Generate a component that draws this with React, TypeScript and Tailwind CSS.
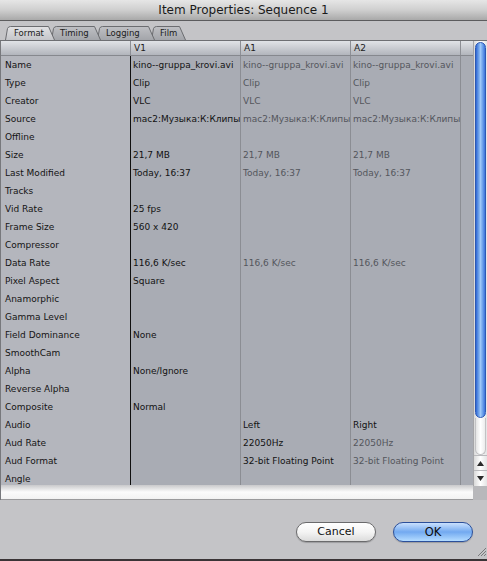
import React from "react"

const font = "font-['DejaVu_Sans',sans-serif]"

type Cell = { t: string; dim?: boolean }
type Row = { label: string; v1?: string; a1?: Cell; a2?: Cell }

const file = "kino--gruppa_krovi.avi"
const src = "mac2:Музыка:К:Клипы:К"

const rows: Row[] = [
  { label: "Name", v1: file, a1: { t: file, dim: true }, a2: { t: file, dim: true } },
  { label: "Type", v1: "Clip", a1: { t: "Clip", dim: true }, a2: { t: "Clip", dim: true } },
  { label: "Creator", v1: "VLC", a1: { t: "VLC", dim: true }, a2: { t: "VLC", dim: true } },
  { label: "Source", v1: src, a1: { t: src, dim: true }, a2: { t: src, dim: true } },
  { label: "Offline" },
  { label: "Size", v1: "21,7 MB", a1: { t: "21,7 MB", dim: true }, a2: { t: "21,7 MB", dim: true } },
  { label: "Last Modified", v1: "Today, 16:37", a1: { t: "Today, 16:37", dim: true }, a2: { t: "Today, 16:37", dim: true } },
  { label: "Tracks" },
  { label: "Vid Rate", v1: "25 fps" },
  { label: "Frame Size", v1: "560 x 420" },
  { label: "Compressor" },
  { label: "Data Rate", v1: "116,6 K/sec", a1: { t: "116,6 K/sec", dim: true }, a2: { t: "116,6 K/sec", dim: true } },
  { label: "Pixel Aspect", v1: "Square" },
  { label: "Anamorphic" },
  { label: "Gamma Level" },
  { label: "Field Dominance", v1: "None" },
  { label: "SmoothCam" },
  { label: "Alpha", v1: "None/Ignore" },
  { label: "Reverse Alpha" },
  { label: "Composite", v1: "Normal" },
  { label: "Audio", a1: { t: "Left" }, a2: { t: "Right" } },
  { label: "Aud Rate", a1: { t: "22050Hz" }, a2: { t: "22050Hz", dim: true } },
  { label: "Aud Format", a1: { t: "32-bit Floating Point" }, a2: { t: "32-bit Floating Point", dim: true } },
  { label: "Angle" },
]

const tabs = [
  { name: "Format", w: 50, active: true },
  { name: "Timing", w: 50 },
  { name: "Logging", w: 58 },
  { name: "Film", w: 35 },
]

function Tab({ name, w, active, z }: { name: string; w: number; active?: boolean; z: number }) {
  const h = 14
  const d = `M0.5,${h} L2.5,2.5 Q3.3,0.5 5.5,0.5 L${w - 6.5},0.5 L${w - 0.5},${h}`
  return (
    <div className="relative h-[14px] shrink-0 -ml-[4px] first:ml-0" style={{ width: w, zIndex: z }}>
      <svg className="absolute inset-0" width={w} height={h}>
        <defs>
          <linearGradient id={"g" + name} x1="0" y1="0" x2="0" y2="1">
            <stop offset="0" stopColor={active ? "#e2e2e4" : "#bfc0c4"} />
            <stop offset="1" stopColor={active ? "#c4c5c9" : "#a3a5aa"} />
          </linearGradient>
        </defs>
        <path d={d + " Z"} fill={`url(#g${name})`} />
        <path d={d} fill="none" stroke="#6b6c70" strokeWidth="1" />
      </svg>
      <div className={`relative pl-[9px] pt-[1px] text-[8.5px] leading-[13px] text-[#1c1c1c] whitespace-nowrap ${font}`}>{name}</div>
    </div>
  )
}

function Val({ c }: { c?: Cell }) {
  if (!c) return null
  return <span className={c.dim ? "text-[#54565c]" : "text-[#121212]"}>{c.t}</span>
}

export default function App() {
  return (
    <div className={`w-[487px] h-[561px] flex flex-col bg-[#c4c4c7] overflow-hidden ${font}`}>
      <div className="h-[21px] shrink-0 border-b border-[#5c5c5e] bg-gradient-to-b from-[#e6e6e6] via-[#cfcfcf] to-[#a9a9a9] flex items-center justify-center">
        <span className="text-[12px] text-[#1a1a1a]">Item Properties: Sequence 1</span>
      </div>

      <div className="h-[19px] shrink-0 flex items-end pl-[5px]">
        {tabs.map((t, i) => (
          <Tab key={t.name} name={t.name} w={t.w} active={t.active} z={10 - i} />
        ))}
      </div>

      <div className="flex h-[460px] shrink-0 border-t border-[#6e6f73]">
        <div className="flex-1 flex flex-col border-l border-[#77787c] min-w-0">
          <div className="h-[15px] shrink-0 grid grid-cols-[130px_110px_110px_110px_1fr] border-b border-[#86888e] bg-gradient-to-b from-[#e1e3e7] to-[#b2b5bc] text-[9px] leading-[14px] text-[#1c1c1c]">
            <div className="border-r border-[#8d8f95]" />
            <div className="border-r border-[#8d8f95] pl-[3px]">V1</div>
            <div className="border-r border-[#8d8f95] pl-[3px]">A1</div>
            <div className="border-r border-[#8d8f95] pl-[3px]">A2</div>
            <div />
          </div>
          <div className="h-[429px] shrink-0 overflow-hidden grid grid-cols-[130px_110px_110px_110px_1fr] text-[9px] leading-[18px]">
            <div className="flex flex-col border-r border-[#101010] bg-[#b4b6bd] text-[#141414]">
              {rows.map(r => (
                <div key={r.label} className="h-[18px] pl-[4px] whitespace-nowrap">{r.label}</div>
              ))}
            </div>
            <div className="flex flex-col border-r border-[#8b8d93] bg-[#a9acb4] text-[#121212]">
              {rows.map(r => (
                <div key={r.label} className="h-[18px] pl-[2px] whitespace-nowrap overflow-hidden">{r.v1}</div>
              ))}
            </div>
            <div className="flex flex-col border-r border-[#8b8d93] bg-[#a9acb4]">
              {rows.map(r => (
                <div key={r.label} className="h-[18px] pl-[2px] whitespace-nowrap overflow-hidden"><Val c={r.a1} /></div>
              ))}
            </div>
            <div className="flex flex-col border-r border-[#8b8d93] bg-[#a9acb4]">
              {rows.map(r => (
                <div key={r.label} className="h-[18px] pl-[2px] whitespace-nowrap overflow-hidden"><Val c={r.a2} /></div>
              ))}
            </div>
            <div className="bg-[#a9acb4]" />
          </div>
          <div className="h-[15px] shrink-0 bg-gradient-to-b from-[#c9c9cb] via-[#fbfbfb] to-[#f2f2f2] border-b border-[#9a9a9c]" />
        </div>

        <div className="w-[14px] shrink-0 flex flex-col">
          <div className="h-[445px] shrink-0 flex flex-col bg-gradient-to-r from-[#d9d9d9] via-white to-[#e4e4e4] border-l border-[#a5a5a8]">
            <div className="h-[376px] shrink-0 mx-[1px] mt-[1px] rounded-full border border-[#2c58b4] bg-gradient-to-r from-[#2f66d2] via-[#9cc8f8] to-[#3b74da]" />
            <div className="h-[37px] shrink-0 mx-[1px] rounded-b-full border-b border-x border-[#c2c2c4]" />
            <div className="h-[15px] shrink-0 flex items-center justify-center border-t border-[#b9b9bc]">
              <svg width="7" height="5"><path d="M3.5,0 L7,5 L0,5 Z" fill="#2a2a2a" /></svg>
            </div>
            <div className="h-[16px] shrink-0 flex items-center justify-center border-t border-[#b9b9bc]">
              <svg width="7" height="5"><path d="M0,0 L7,0 L3.5,5 Z" fill="#2a2a2a" /></svg>
            </div>
          </div>
          <div className="flex-1 bg-[#b8b8bb]" />
        </div>
      </div>

      <div className="flex-1 relative flex justify-end items-start pt-[22px] pr-[14px] gap-[17px]">
        <button className="w-[80px] h-[20px] rounded-full border border-[#6a6a6c] bg-gradient-to-b from-white via-[#f4f4f4] to-[#dcdcdc] text-[11px] leading-[18px] text-[#111] shadow-[0_1px_1px_rgba(0,0,0,0.2)]">
          Cancel
        </button>
        <button className="w-[80px] h-[20px] rounded-full border border-[#2b4f9a] bg-gradient-to-b from-[#c9e0fd] via-[#72a9f0] to-[#b4dcff] text-[11.5px] leading-[15px] text-[#0c0c0c] shadow-[0_1px_1px_rgba(0,0,0,0.2)]">
          OK
        </button>
        <svg className="absolute right-0 bottom-[2px]" width="12" height="12">
          <path d="M11,3 L3,11 M11,6 L6,11 M11,9 L9,11" stroke="#7a7a7c" strokeWidth="1" />
        </svg>
      </div>
      <div className="h-[2px] shrink-0 bg-[#3a3436]" />
    </div>
  )
}
